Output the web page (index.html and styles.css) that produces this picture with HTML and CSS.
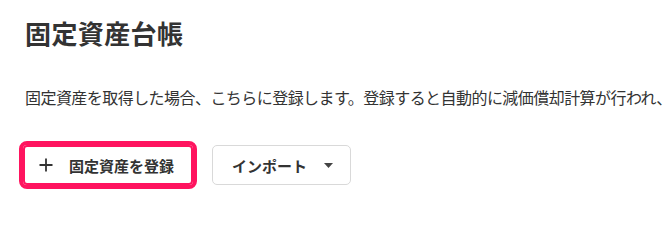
FILE: index.html
```
<!DOCTYPE html>
<html lang="ja">
<head>
<meta charset="utf-8">
<link rel="stylesheet" href="styles.css">
</head>
<body>
<main class="page">
  <h1 class="title">固定資産台帳</h1>
  <p class="desc">固定資産を取得した場合、こちらに登録します。登録すると自動的に減価償却計算が行われ、</p>
  <div class="actions">
    <button class="btn btn-primary" type="button">
      <svg class="plus" width="14" height="14" viewBox="0 0 14 14"><path d="M7 0.5V13.5M0.5 7H13.5" stroke="#333" stroke-width="1.8" fill="none"/></svg>
      <span>固定資産を登録</span>
    </button>
    <button class="btn btn-secondary" type="button">
      <span>インポート</span>
      <svg class="caret" width="9" height="5" viewBox="0 0 9 5"><path d="M0 0H9L4.5 5Z" fill="#444"/></svg>
    </button>
  </div>
</main>
</body>
</html>
```
FILE: styles.css
```
html, body {
  margin: 0;
  padding: 0;
  background: #fff;
}
body {
  font-family: "Noto Sans CJK JP", "Noto Sans", sans-serif;
  color: #333;
  width: 667px;
  height: 205px;
  overflow: hidden;
}
.page {
  padding: 16px 0 0 25px;
}
.title {
  margin: 0;
  font-size: 26px;
  font-weight: 700;
  line-height: 34px;
  color: #333;
  letter-spacing: 0.4px;
}
.desc {
  margin: 35px 0 0 0;
  font-size: 16px;
  line-height: 24px;
  white-space: nowrap;
  color: #333;
  letter-spacing: -0.55px;
}
.actions {
  display: flex;
  align-items: center;
  gap: 19px;
  margin-top: 36px;
}
.btn {
  display: flex;
  align-items: center;
  box-sizing: border-box;
  height: 40px;
  background: #fff;
  font-family: inherit;
  font-size: 15px;
  font-weight: 700;
  color: #333;
  cursor: pointer;
}
.btn-primary {
  margin-left: -2px;
  width: 170px;
  padding: 0 0 0 14px;
  border: 2px solid #ff145f;
  border-radius: 4px;
  outline: 4px solid #ff145f;
  outline-offset: 0;
  gap: 16px;
}
.btn-secondary {
  width: 139px;
  padding: 0 0 0 19px;
  border: 1px solid #d9d9d9;
  border-radius: 5px;
  gap: 17px;
}
.plus, .caret {
  flex: none;
  display: block;
}
```
